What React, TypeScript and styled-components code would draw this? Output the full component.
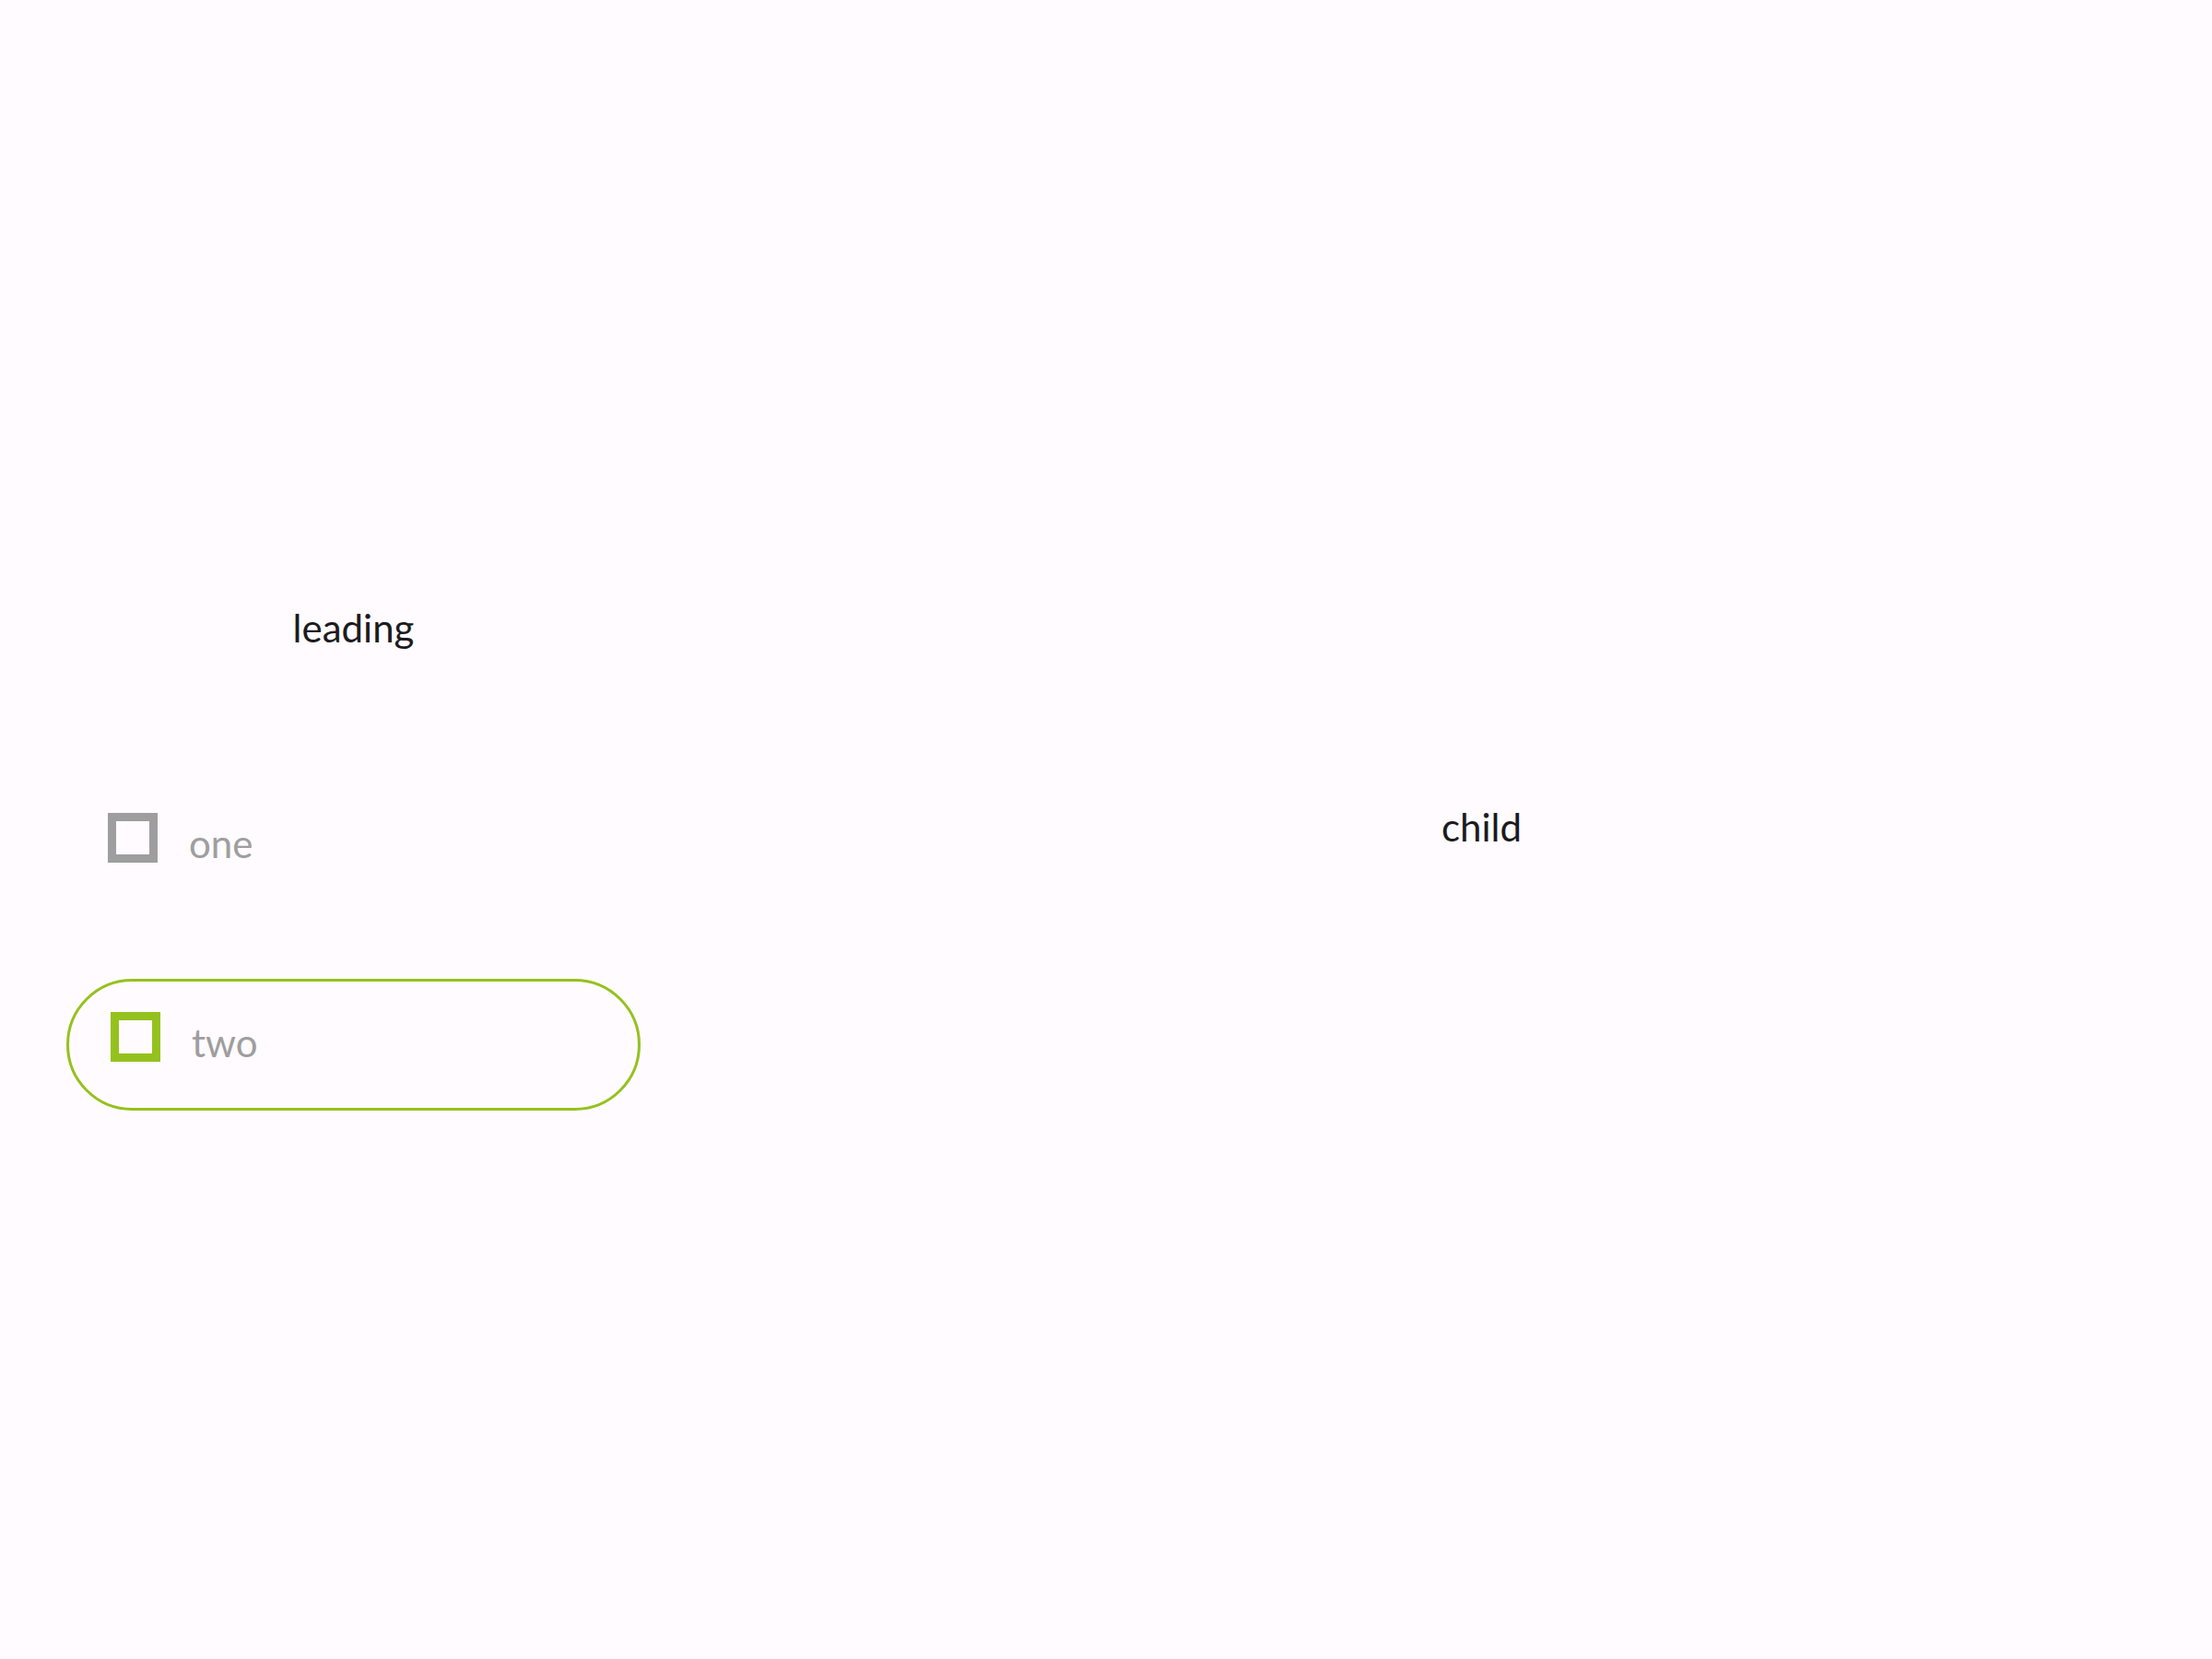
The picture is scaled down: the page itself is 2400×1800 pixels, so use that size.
import React from "react";
import styled, { createGlobalStyle } from "styled-components";

const Global = createGlobalStyle`
  html, body { margin: 0; padding: 0; background: #fffbfe; }
  body { font-family: Lato, "Open Sans", sans-serif; }
`;

const Page = styled.div`
  width: 2400px;
  height: 1800px;
  display: flex;
  background: #fffbfe;
`;

const Rail = styled.div`
  width: 767px;
  box-sizing: border-box;
  padding: 656px 0 0 72px;
  display: flex;
  flex-direction: column;
`;

const Leading = styled.div`
  width: 623px;
  text-align: center;
  font-size: 42px;
  line-height: 50px;
  color: #1c1b1f;
`;

const Destinations = styled.div`
  display: flex;
  flex-direction: column;
  gap: 82px;
  margin-top: 131px;
`;

const Item = styled.div<{ $selected?: boolean }>`
  width: 623px;
  height: 143px;
  box-sizing: border-box;
  display: flex;
  align-items: center;
  gap: 34px;
  padding: ${(p) => (p.$selected ? "0 45px 18px" : "0 45px")};
  border-radius: 72px;
  border: ${(p) => (p.$selected ? "3px solid #95c11f" : "none")};
`;

const Box = styled.div<{ $selected?: boolean }>`
  width: 54px;
  height: 54px;
  box-sizing: border-box;
  border: 9px solid ${(p) => (p.$selected ? "#95c11f" : "#9e9e9e")};
  flex: none;
`;

const Label = styled.span`
  font-size: 42px;
  line-height: 50px;
  color: #9e9e9e;
  margin-top: 12px;
`;

const Body = styled.div`
  flex: 1;
  display: flex;
  align-items: center;
  justify-content: center;
  padding-left: 48px;
  padding-bottom: 6px;
`;

const Child = styled.span`
  font-size: 42px;
  line-height: 50px;
  color: #1c1b1f;
`;

export default function App() {
  return (
    <>
      <Global />
      <Page>
        <Rail>
          <Leading>leading</Leading>
          <Destinations>
            <Item>
              <Box />
              <Label>one</Label>
            </Item>
            <Item $selected>
              <Box $selected />
              <Label>two</Label>
            </Item>
          </Destinations>
        </Rail>
        <Body>
          <Child>child</Child>
        </Body>
      </Page>
    </>
  );
}
